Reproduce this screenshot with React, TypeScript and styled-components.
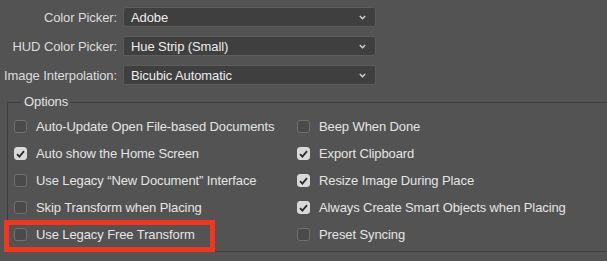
import { Fragment } from 'react';
import styled, { createGlobalStyle } from 'styled-components';

const GlobalStyle = createGlobalStyle`
    html, body {
        margin: 0;
        padding: 0;
        background: #535353;
        overflow: hidden;
    }
    body {
        font-family: "Liberation Sans", Arial, sans-serif;
        font-size: 13px;
        letter-spacing: -0.1px;
        color: #e2e2e2;
    }
`;

const Page = styled.div`
    width: 607px;
    height: 261px;
    padding-top: 7px;
    box-sizing: border-box;
`;

const FormGrid = styled.div`
    display: grid;
    grid-template-columns: 117px 253px;
    grid-auto-rows: 20px;
    column-gap: 6px;
    row-gap: 9px;
`;

const FieldLabel = styled.label`
    display: flex;
    align-items: center;
    justify-content: flex-end;
    color: #dcdcdc;
    white-space: nowrap;
`;

const SelectBox = styled.div`
    display: flex;
    align-items: center;
    justify-content: space-between;
    padding: 0 9px 0 7px;
    background: #3f3f3f;
    border: 1px solid #5c5c5c;
    border-radius: 3px;
    color: #ececec;
    box-sizing: border-box;
`;

const GroupBox = styled.fieldset`
    margin: 9px -30px 0 7px;
    padding: 3px 0 3px 6px;
    border: 1px solid #3f3f3f;
    border-right: none;
    min-width: 0;
`;

const Legend = styled.legend`
    margin-left: 8px;
    padding: 0 2px;
    line-height: 16px;
    color: #e2e2e2;
`;

const OptionGrid = styled.div`
    display: grid;
    grid-template-columns: 283px 1fr;
    grid-template-rows: repeat(5, 27px);
    grid-auto-flow: column;
`;

const OptionItem = styled.label<{ $highlight?: boolean }>`
    position: relative;
    display: flex;
    align-items: center;
    gap: 9px;
    white-space: nowrap;
    color: #e4e4e4;

    ${(p) =>
        p.$highlight &&
        `
        &::after {
            content: '';
            position: absolute;
            top: -1px;
            left: -10px;
            width: 211px;
            height: 32px;
            border: 5px solid #f4361c;
            box-sizing: border-box;
            pointer-events: none;
        }
    `}
`;

const Box = styled.span<{ $checked: boolean }>`
    display: inline-flex;
    align-items: center;
    justify-content: center;
    width: 13px;
    height: 13px;
    box-sizing: border-box;
    border-radius: 3px;
    flex-shrink: 0;
    background: ${(p) => (p.$checked ? '#d9d9d9' : '#4a4a4a')};
    border: 1px solid ${(p) => (p.$checked ? '#d9d9d9' : '#707070')};
`;

const Chevron = () => (
    <svg width="7" height="5" viewBox="0 0 7 5">
        <path d="M0.8 1 L3.5 3.8 L6.2 1" fill="none" stroke="#d6d6d6" strokeWidth="1.3" />
    </svg>
);

const Check = () => (
    <svg width="9" height="8" viewBox="0 0 9 8">
        <path d="M1 4.2 L3.4 6.6 L8 1.2" fill="none" stroke="#2b2b2b" strokeWidth="1.8" />
    </svg>
);

const Checkbox = (props: { label: string; checked?: boolean; highlight?: boolean }) => {
    const { label, checked = false, highlight } = props;
    return (
        <OptionItem $highlight={highlight}>
            <Box $checked={checked}>{checked && <Check />}</Box>
            {label}
        </OptionItem>
    );
};

const selects = [
    { label: 'Color Picker:', value: 'Adobe' },
    { label: 'HUD Color Picker:', value: 'Hue Strip (Small)' },
    { label: 'Image Interpolation:', value: 'Bicubic Automatic' },
];

const options = [
    { label: 'Auto-Update Open File-based Documents' },
    { label: 'Auto show the Home Screen', checked: true },
    { label: 'Use Legacy \u201CNew Document\u201D Interface' },
    { label: 'Skip Transform when Placing' },
    { label: 'Use Legacy Free Transform', highlight: true },
    { label: 'Beep When Done' },
    { label: 'Export Clipboard', checked: true },
    { label: 'Resize Image During Place', checked: true },
    { label: 'Always Create Smart Objects when Placing', checked: true },
    { label: 'Preset Syncing' },
];

const App = () => {
    return (
        <Page>
            <GlobalStyle />
            <FormGrid>
                {selects.map((s) => (
                    <Fragment key={s.label}>
                        <FieldLabel>{s.label}</FieldLabel>
                        <SelectBox>
                            {s.value}
                            <Chevron />
                        </SelectBox>
                    </Fragment>
                ))}
            </FormGrid>
            <GroupBox>
                <Legend>Options</Legend>
                <OptionGrid>
                    {options.map((o) => (
                        <Checkbox key={o.label} label={o.label} checked={o.checked} highlight={o.highlight} />
                    ))}
                </OptionGrid>
            </GroupBox>
        </Page>
    );
};

export default App;
